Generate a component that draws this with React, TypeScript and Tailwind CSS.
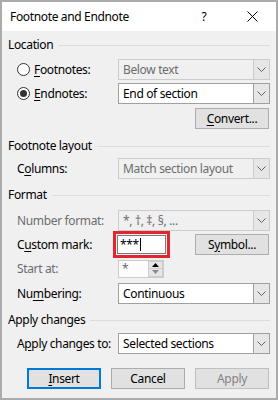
import { ReactNode } from 'react'

function Chevron({ color = '#606060' }: { color?: string }) {
  return (
    <svg width="9" height="5" viewBox="0 0 9 5">
      <path d="M0.5 0.5 L4.5 4.5 L8.5 0.5" fill="none" stroke={color} strokeWidth="1" />
    </svg>
  )
}

function Group({ title, className = '' }: { title: string; className?: string }) {
  return (
    <div className={`flex items-center h-4 pl-[6px] pr-[6px] gap-[5px] ${className}`}>
      <span>{title}</span>
      <div className="h-px flex-1 bg-[#dcdcdc]" />
    </div>
  )
}

function Select({ value, disabled = false }: { value: string; disabled?: boolean }) {
  return (
    <div
      className={`flex w-[152px] h-[21px] border ${
        disabled ? 'border-[#cccccc] bg-[#f0f0f0] text-[#6d6d6d]' : 'border-[#a0a0a0] bg-white text-black'
      }`}
    >
      <div className="flex-1 flex items-center pl-[4px] truncate">{value}</div>
      <div
        className={`w-[16px] flex items-center justify-center border-l bg-[#e6e6e6] ${
          disabled ? 'border-[#cccccc]' : 'border-[#a0a0a0]'
        }`}
      >
        <Chevron />
      </div>
    </div>
  )
}

function Btn({
  children,
  primary = false,
  disabled = false,
  className = '',
}: {
  children: ReactNode
  primary?: boolean
  disabled?: boolean
  className?: string
}) {
  return (
    <div
      className={`w-[74px] h-[21px] flex items-center justify-center bg-[#e1e1e1] ${
        primary ? 'border-2 border-[#0078d7]' : 'border border-[#adadad]'
      } ${disabled ? 'text-[#838383] border-[#bfbfbf]' : 'text-black'} ${className}`}
    >
      {children}
    </div>
  )
}

function Radio({ checked }: { checked: boolean }) {
  return (
    <div className="w-[13px] h-[13px] rounded-full border border-[#333] bg-white flex items-center justify-center">
      {checked && <div className="w-[7px] h-[7px] rounded-full bg-[#333]" />}
    </div>
  )
}

function Row({ label, children, className = '', gray = false }: { label: ReactNode; children: ReactNode; className?: string; gray?: boolean }) {
  return (
    <div className={`flex items-center h-[21px] pl-[15px] ${className}`}>
      <div className={`w-[101px] ${gray ? 'text-[#6d6d6d]' : ''}`}>{label}</div>
      {children}
    </div>
  )
}

const U = ({ children }: { children: ReactNode }) => <span className="underline underline-offset-2">{children}</span>

export default function App() {
  return (
    <div className="w-[278px] h-[400px] border-2 border-[#ababab] flex flex-col font-['Noto_Sans',sans-serif] text-[12px] leading-4 tracking-[-0.35px] text-black">
      <div className="h-[29px] bg-white flex items-center pl-[8px] shrink-0">
        <span className="flex-1">Footnote and Endnote</span>
        <span className="w-[10px] text-center mr-[38px]">?</span>
        <svg width="11" height="11" viewBox="0 0 11 11" className="mr-[18px]">
          <path d="M0.5 0.5 L10.5 10.5 M10.5 0.5 L0.5 10.5" stroke="#000" strokeWidth="1" />
        </svg>
      </div>
      <div className="flex-1 bg-[#f0f0f0] flex flex-col">
        <Group title="Location" className="mt-[6px]" />
        <div className="flex items-center h-[21px] pl-[15px] mt-[6px]">
          <Radio checked={false} />
          <span className="ml-[4px] w-[84px]">
            <U>F</U>ootnotes:
          </span>
          <Select value="Below text" disabled />
        </div>
        <div className="flex items-center h-[21px] pl-[15px] mt-[3px]">
          <Radio checked />
          <span className="ml-[4px] w-[84px]">
            <U>E</U>ndnotes:
          </span>
          <Select value="End of section" />
        </div>
        <div className="flex justify-end pr-[7px] mt-[4px]">
          <Btn>
            <U>C</U>onvert...
          </Btn>
        </div>

        <Group title="Footnote layout" className="mt-[9px]" />
        <Row
          className="mt-[4px]"
          label={
            <>
              C<U>o</U>lumns:
            </>
          }
        >
          <Select value="Match section layout" disabled />
        </Row>

        <Group title="Format" className="mt-[8px]" />
        <Row className="mt-[7px]" label="Number format:" gray>
          <Select value="*, †, ‡, §, ..." disabled />
        </Row>
        <Row
          className="mt-[3px]"
          label={
            <>
              C<U>u</U>stom mark:
            </>
          }
        >
          <div className="w-[49px] h-[19px] border border-[#7a7a7a] bg-white flex items-center pl-[2px] -ml-px outline-3 outline-solid outline-[#e3262d] outline-offset-1">
            <span className="leading-none">***</span>
            <div className="w-px h-[13px] bg-black ml-[1px]" />
          </div>
          <div className="flex-1 flex justify-end pr-[7px]">
            <Btn>
              S<U>y</U>mbol...
            </Btn>
          </div>
        </Row>
        <Row className="mt-[3px]" label="Start at:" gray>
          <div className="w-[46px] h-[18px] border border-[#cccccc] bg-[#fcfcfc] flex">
            <div className="flex-1 flex items-center pl-[3px] text-[#6d6d6d]">*</div>
            <div className="w-[15px] flex flex-col">
              <div className="flex-1 bg-[#e6e6e6] border border-[#cccccc] flex items-center justify-center">
                <svg width="7" height="4" viewBox="0 0 7 4">
                  <path d="M0 4 L3.5 0 L7 4 Z" fill="#000" />
                </svg>
              </div>
              <div className="flex-1 bg-[#e6e6e6] border border-t-0 border-[#cccccc] flex items-center justify-center">
                <svg width="7" height="4" viewBox="0 0 7 4">
                  <path d="M0 0 L3.5 4 L7 0 Z" fill="#8a8a8a" />
                </svg>
              </div>
            </div>
          </div>
        </Row>
        <Row
          className="mt-[4px]"
          label={
            <>
              Nu<U>m</U>bering:
            </>
          }
        >
          <Select value="Continuous" />
        </Row>

        <Group title="Apply changes" className="mt-[8px]" />
        <Row
          className="mt-[5px]"
          label={
            <>
              A<U>p</U>ply changes to:
            </>
          }
        >
          <Select value="Selected sections" />
        </Row>

        <div className="flex justify-end gap-[10px] pr-[7px] mt-[14px]">
          <Btn primary>
            <U>I</U>nsert
          </Btn>
          <Btn>Cancel</Btn>
          <Btn disabled>Apply</Btn>
        </div>
      </div>
    </div>
  )
}
